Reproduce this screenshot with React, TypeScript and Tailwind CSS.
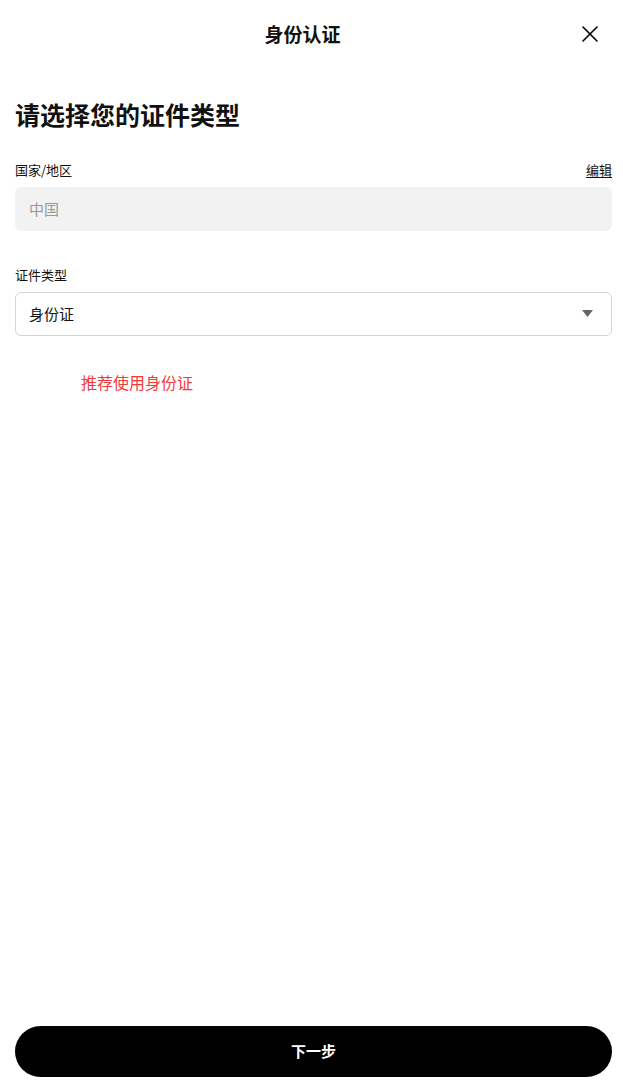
const font = { fontFamily: '"Noto Sans CJK SC", "Noto Sans", sans-serif' };

export default function App() {
	return (
		<div
			className="flex h-screen flex-col bg-white pl-[15px] pr-[11px] text-[#111]"
			style={font}
		>
			{/* Header */}
			<header className="relative flex h-[68px] shrink-0 items-center justify-center pr-[22px]">
				<h2 className="text-[19px] font-bold">身份认证</h2>
				<button className="absolute right-[14px] top-1/2 -translate-y-1/2">
					<svg width="16" height="16" viewBox="0 0 16 16" className="block">
						<path
							d="M1 1l14 14M15 1L1 15"
							stroke="#000"
							strokeWidth="1.6"
							strokeLinecap="round"
						/>
					</svg>
				</button>
			</header>

			<h1 className="mt-[28px] text-[25px] font-bold leading-[36px]">
				请选择您的证件类型
			</h1>

			{/* Country */}
			<div className="mt-[29px] flex items-center justify-between text-[13px] leading-[18px]">
				<span>国家/地区</span>
				<a href="#" className="underline underline-offset-2">
					编辑
				</a>
			</div>
			<div className="mt-[8px] flex h-[44px] items-center rounded-[6px] bg-[#f2f2f2] px-[14px] text-[15px] text-[#999]">
				中国
			</div>

			{/* Document type */}
			<div className="mt-[35px] text-[13px] leading-[18px]">证件类型</div>
			<div className="mt-[8px] flex h-[44px] items-center justify-between rounded-[6px] border border-[#d4d4d4] px-[13px] text-[15px]">
				<span>身份证</span>
				<svg width="11" height="8" viewBox="0 0 11 8" className="mr-[5px]">
					<path d="M0 0h11L5.5 7z" fill="#666" />
				</svg>
			</div>

			<p className="ml-[66px] mt-[35px] text-[16px] leading-[22px] text-[#f33a3a]">
				推荐使用身份证
			</p>

			<button className="mb-[7px] mt-auto h-[51px] w-full shrink-0 rounded-full bg-black text-[15px] font-bold text-white">
				下一步
			</button>
		</div>
	);
}
